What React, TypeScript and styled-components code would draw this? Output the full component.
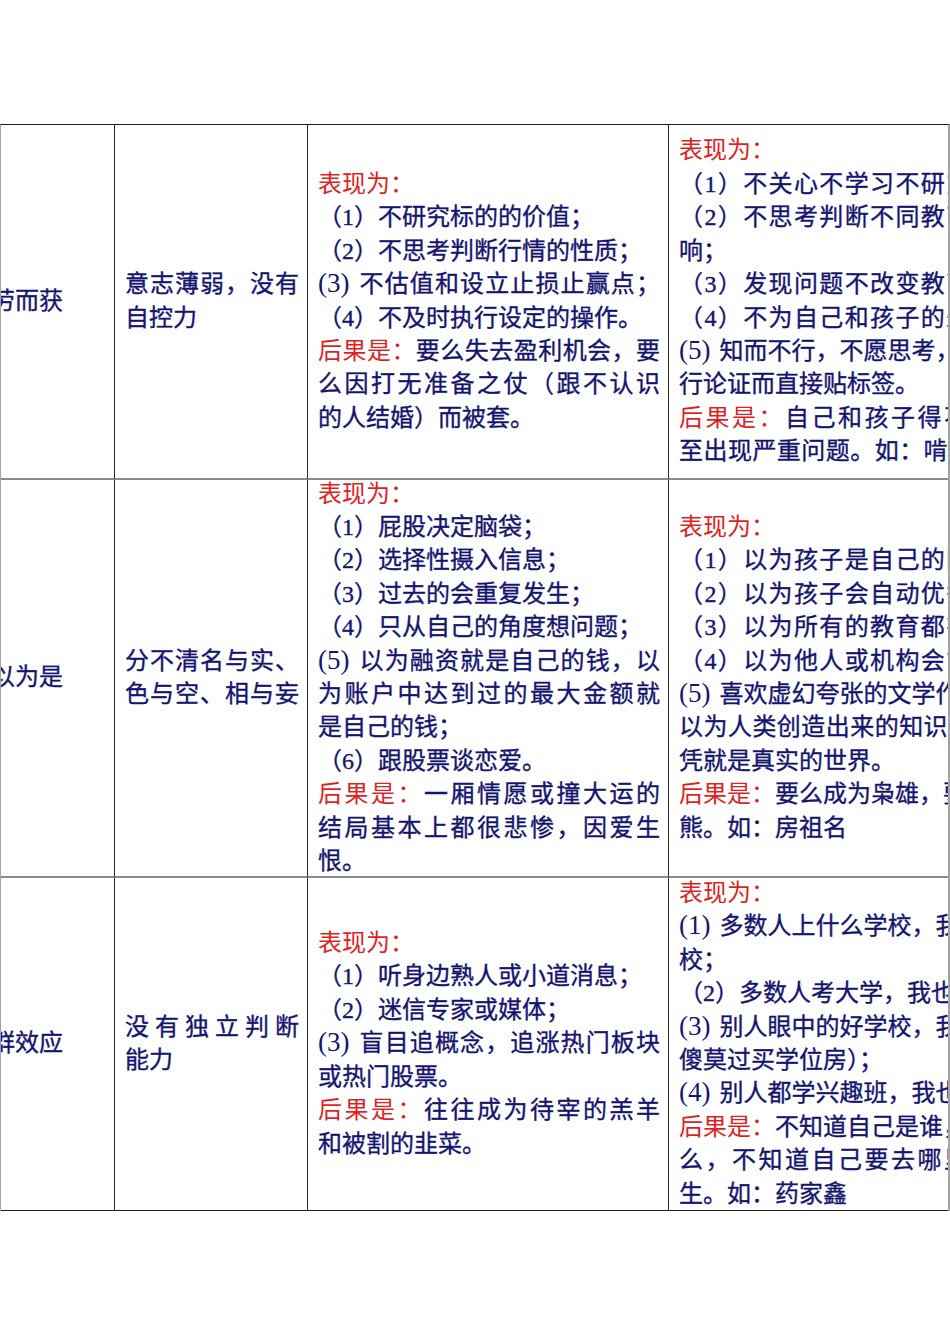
import React from 'react';
import styled, { createGlobalStyle } from 'styled-components';

const GlobalStyle = createGlobalStyle`
  html, body {
    margin: 0;
    padding: 0;
    background: #ffffff;
  }
`;

interface RowData {
  name: string;
  cause: string[];
  stock: string[];
  parent: string[];
  height: number;
  last?: boolean;
}

// lines that end with "|" are stretched to the full cell width
const rows: RowData[] = [
  {
    name: '不劳而获',
    cause: ['意志薄弱，没有|', '自控力'],
    stock: [
      '表现为：',
      '（1）不研究标的的价值；',
      '（2）不思考判断行情的性质；',
      '(3)不估值和设立止损止赢点；|',
      '（4）不及时执行设定的操作。',
      '后果是：要么失去盈利机会，要|',
      '么因打无准备之仗（跟不认识|',
      '的人结婚）而被套。',
    ],
    parent: [
      '表现为：',
      '（1）不关心不学习不研究教育|',
      '（2）不思考判断不同教育的影|',
      '响；',
      '（3）发现问题不改变教育方式|',
      '（4）不为自己和孩子的未来想|',
      '(5)知而不行，不愿思考，不愿进行',
      '行论证而直接贴标签。',
      '后果是：自己和孩子得不到成|',
      '至出现严重问题。如：啃老族。|',
    ],
    height: 355,
  },
  {
    name: '自以为是',
    cause: ['分不清名与实、|', '色与空、相与妄|'],
    stock: [
      '表现为：',
      '（1）屁股决定脑袋；',
      '（2）选择性摄入信息；',
      '（3）过去的会重复发生；',
      '（4）只从自己的角度想问题；',
      '(5)以为融资就是自己的钱，以|',
      '为账户中达到过的最大金额就|',
      '是自己的钱；',
      '（6）跟股票谈恋爱。',
      '后果是：一厢情愿或撞大运的|',
      '结局基本上都很悲惨，因爱生|',
      '恨。',
    ],
    parent: [
      '表现为：',
      '（1）以为孩子是自己的附属品|',
      '（2）以为孩子会自动优秀成才|',
      '（3）以为所有的教育都有用处|',
      '（4）以为他人或机构会管孩子|',
      '(5)喜欢虚幻夸张的文学作品，',
      '以为人类创造出来的知识和想象|',
      '凭就是真实的世界。',
      '后果是：要么成为枭雄，要么成为狗',
      '熊。如：房祖名',
    ],
    height: 398,
  },
  {
    name: '羊群效应',
    cause: ['没有独立判断|', '能力'],
    stock: [
      '表现为：',
      '（1）听身边熟人或小道消息；',
      '（2）迷信专家或媒体；',
      '(3)盲目追概念，追涨热门板块|',
      '或热门股票。',
      '后果是：往往成为待宰的羔羊|',
      '和被割的韭菜。',
    ],
    parent: [
      '表现为：',
      '(1)多数人上什么学校，我也上什么学',
      '校；',
      '（2）多数人考大学，我也考大学；',
      '(3)别人眼中的好学校，我也要上（最',
      '傻莫过买学位房）；',
      '(4)别人都学兴趣班，我也学；',
      '后果是：不知道自己是谁，想要什',
      '么，不知道自己要去哪里虚度|',
      '生。如：药家鑫',
    ],
    height: 333,
    last: true,
  },
];

const LABELS = ['表现为：', '后果是：'];
const NUM = /^\((\d)\)/;

function renderBody(text: string) {
  const m = text.match(NUM);
  if (!m) return text;
  return (
    <>
      <Num>{m[0]}</Num>
      {text.slice(m[0].length)}
    </>
  );
}

function renderLine(raw: string, key: number) {
  const full = raw.endsWith('|');
  const text = full ? raw.slice(0, -1) : raw;
  const label = LABELS.find((l) => text.startsWith(l));
  return (
    <Line key={key} $full={full}>
      {label ? (
        <>
          <Label>{label}</Label>
          {text.slice(label.length)}
        </>
      ) : (
        renderBody(text)
      )}
    </Line>
  );
}

function App() {
  return (
    <Page>
      <GlobalStyle />
      <Frame>
        <Table>
          {rows.map((row, i) => (
            <React.Fragment key={i}>
              <NameCell $h={row.height} $last={row.last}>
                <Line>{row.name}</Line>
              </NameCell>
              <TextCell $h={row.height} $last={row.last}>
                {row.cause.map(renderLine)}
              </TextCell>
              <TextCell $h={row.height} $last={row.last}>
                {row.stock.map(renderLine)}
              </TextCell>
              <TextCell $h={row.height} $last={row.last}>
                {row.parent.map(renderLine)}
              </TextCell>
            </React.Fragment>
          ))}
        </Table>
      </Frame>
    </Page>
  );
}

export default App;

const Page = styled.div`
  width: 950px;
  min-height: 1344px;
  padding-top: 124px;
  box-sizing: border-box;
  background: #ffffff;
  font-family: 'Liberation Serif', 'Noto Sans CJK SC', serif;
  font-size: 24px;
  line-height: 33.4px;
  color: #15156f;
  -webkit-text-stroke: 0.35px #15156f;
`;

const Frame = styled.div`
  width: 950px;
  box-sizing: border-box;
  overflow: hidden;
  border-top: 1px solid #1e1e1e;
  border-left: 1px solid #a3a3a3;
  border-right: 2px solid #a3a3a3;
`;

const Table = styled.div`
  display: grid;
  grid-template-columns: 159px 193px 361px 361px;
  margin-left: -45px;
  width: max-content;
`;

const BaseCell = styled.div<{ $h: number; $last?: boolean }>`
  height: ${(p) => p.$h}px;
  box-sizing: border-box;
  border-right: 1px solid #2a2a2a;
  border-bottom: ${(p) => (p.$last ? '1px solid #1e1e1e' : '2px solid #8c8c8c')};
  display: flex;
  flex-direction: column;
  justify-content: center;
  overflow: visible;
`;

const NameCell = styled(BaseCell)`
  padding: 0 10px 0 11px;
  white-space: nowrap;
`;

const TextCell = styled(BaseCell)`
  padding: 0 8px 0 10px;
`;

const Line = styled.div<{ $full?: boolean }>`
  white-space: nowrap;
  text-align: ${(p) => (p.$full ? 'justify' : 'left')};
  text-align-last: ${(p) => (p.$full ? 'justify' : 'left')};
  text-justify: inter-character;
`;

const Num = styled.span`
  font-size: 27px;
  line-height: 1;
  margin-right: 9px;
  -webkit-text-stroke: 0;
`;

const Label = styled.span`
  color: #e11f1f;
  -webkit-text-stroke: 0;
`;
